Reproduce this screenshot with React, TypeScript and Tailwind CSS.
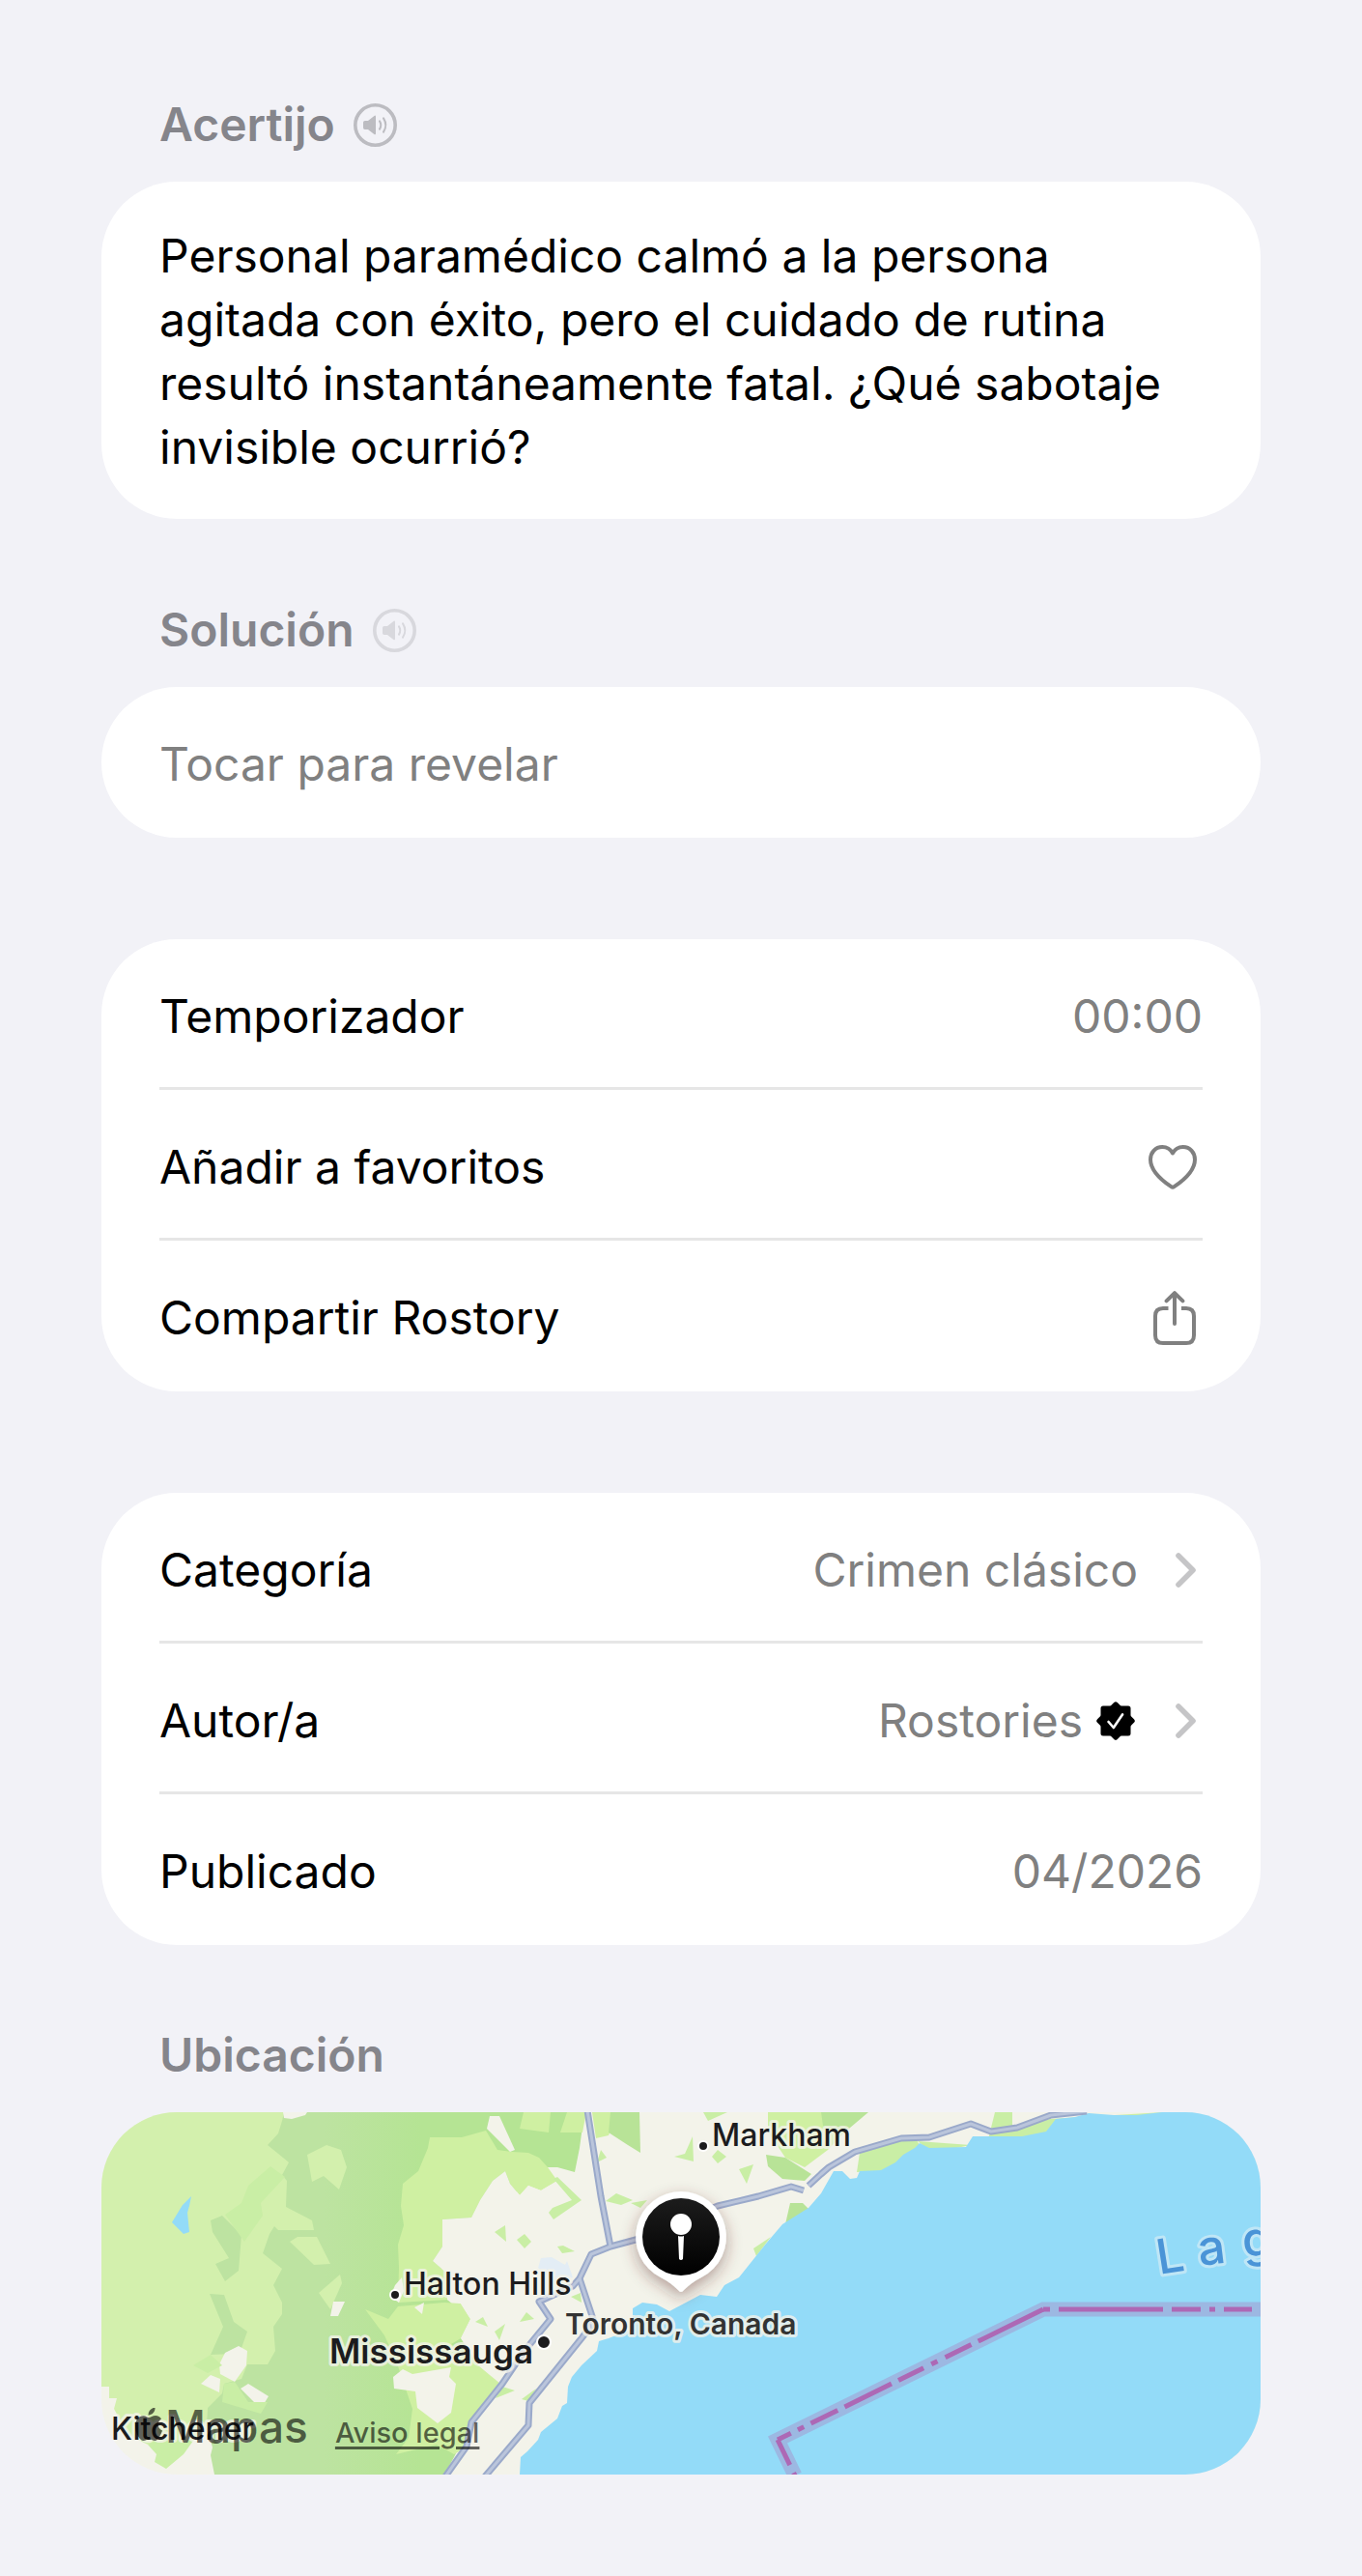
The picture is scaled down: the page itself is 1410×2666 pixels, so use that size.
import React from 'react';

const GREEN = '#c9eea5';
const URBAN = '#f3f3ea';
const LIME = '#cff0a2';
const WOODS = '#b8e397';
const FIELD = '#d3f0ad';

const fields = [
  '233,34 213,44 218,72 230,66 246,80 254,57 248,39',
  '195,134 203,129 223,129 232,147 237,157 220,158',
  '225,187 247,168 249,177 237,204',
];

const woods = [
  '113,112 125,107 145,127 142,164 128,175 118,157 132,151 115,124',
  '112,188 127,189 137,217 151,227 145,244 135,250 113,251 126,222',
];

const limes = [
  '340,26 373,26 398,19 410,39 425,41 442,42 453,47 462,57 472,71 455,81 442,76 433,86 423,74 418,61 405,71 392,91 383,109 353,111 353,139 343,154 358,167 358,194 307,197 308,161 307,137 313,117 310,97 312,74 328,61 338,37',
  '273,204 297,214 307,201 355,197 372,198 382,214 372,234 362,240 390,262 413,281 383,321 377,347 365,354 347,344 305,354 318,337 322,307 305,257 293,231',
  '437,0 465,0 463,21 433,17',
  '482,0 502,0 498,21 475,21',
  '508,0 535,0 525,24 512,27',
  '690,0 747,0 768,22 752,39 728,57 708,47 690,20',
];

const urbanPatches = [
  '302,274 312,266 322,271 362,264 360,274 367,281 362,311 348,322 327,306 325,289 303,286',
  '122,261 128,249 142,242 151,247 150,262 138,279 123,271',
  '103,281 113,272 123,276 122,290',
  '144,286 152,281 173,294 165,307',
  '237,211 240,196 252,196 245,211',
  '299,191 304,179 311,171 313,185 308,197',
  '188,0 213,0 211,3 197,7 189,6',
  '402,4 412,4 428,39 423,41 399,17',
  '324,202 334,197 332,209',
];

const greens = [
  '152,76 175,56 190,67 165,94 167,107 148,134 128,106 145,94',
  '95,262 113,251 125,262 110,270',
  '127,281 138,279 152,300 172,300 165,312 125,300',
  '48,344 60,338 95,340 85,354 67,369 55,362 57,354',
  '623,0 648,0 628,9',
  '593,46 604,43 612,25 613,51',
  '632,46 638,39 647,46 638,53',
  '660,59 675,54 668,74',
  '522,92 533,84 550,91 538,96',
  '548,94 565,91 558,99',
  '463,104 467,99 487,91 468,69 472,67 497,91 468,111',
  '407,124 418,117 419,134',
  '430,132 438,126 445,134 438,141',
  '472,139 478,138 490,144 477,146',
  '513,52 517,39 523,47',
  '433,217 440,207 448,214',
  '387,217 395,212 400,222',
  '407,227 418,219 412,236',
  '408,296 415,284 428,288',
  '435,297 450,286 442,299',
  '675,141 693,129 678,149',
  '782,62 785,42 842,25 850,40 822,60',
  '845,30 900,34 860,42',
  '918,28 925,0 943,0 943,16 982,7 1100,0 1100,8 980,28',
  '486,191 496,187 497,197',
];

const darkWoods = [
  '527,0 557,0 558,42 545,34 525,21',
  '745,0 794,0 768,22 747,14',
  '688,44 708,47 735,64 728,71 705,69 690,56',
  '708,116 713,94 726,94 732,100',
];

const roads = [
  'M503 -2 L517 87 L527 139',
  'M495 172 L507 147 L527 139 L553 132 L638 97 L680 87 L714 77 L727 81',
  'M732 76 L745 64 L753 57 L780 41 L828 27 L857 26 L900 12 L921 20 L948 16 L983 3 L1020 -1',
  'M495 172 L510 217 L497 234 L443 301 L442 324 L397 377',
  'M495 172 L488 180 L453 196 L465 214 L438 247 L415 281 L383 321 L378 346 L356 377',
];

const borders = [
  { d: 'M975 204 L700 339', dash: '75 8 30 9 7 9 29 8 54 8 31 8 7 8 30' },
  { d: 'M975 204 L1200 204', dash: '7 9 108 9 30 9 6 9 29 20' },
  { d: 'M700 339 L718 376', dash: '29 9 10' },
];

function Shapes({ items, fill }: { items: string[]; fill: string }) {
  return (
    <g fill={fill}>
      {items.map((points, i) => (
        <polygon key={i} points={points} />
      ))}
    </g>
  );
}

function MapDrawing() {
  return (
    <svg
      viewBox="0 0 1200 375"
      preserveAspectRatio="xMidYMid slice"
      className="block h-[375px] w-full"
      role="img"
      aria-label="Toronto, Canada"
    >
      <defs>
        <linearGradient id="woods" gradientUnits="userSpaceOnUse" x1="230" x2="330" y1="0" y2="0">
          <stop offset="0" stopColor="#bde3a1" />
          <stop offset="1" stopColor="#b5e494" />
        </linearGradient>
        <linearGradient id="pin" x1="0" x2="0" y1="0" y2="1">
          <stop offset="0" stopColor="#1c1c1c" />
          <stop offset="1" stopColor="#000" />
        </linearGradient>
        <filter id="pinShadow" x="-50%" y="-50%" width="200%" height="200%">
          <feDropShadow dx="0" dy="6" stdDeviation="8" floodColor="#5a2020" floodOpacity="0.4" />
        </filter>
      </defs>

      {/* land */}
      <rect width="1200" height="375" fill={URBAN} />
      <polygon
        fill={FIELD}
        points="0,0 240,0 240,300 115,325 95,340 48,344 28,334 13,307 16,296 8,296 8,284 0,284"
      />
      <polygon
        fill="url(#woods)"
        points="189,0 500,0 495,37 490,62 472,57 460,57 440,76 400,100 350,150 358,194 382,214 372,234 390,262 383,321 365,357 355,375 117,375 113,355 115,347 109,324 110,306 125,291 127,281 145,276 151,261 158,261 172,261 180,247 178,222 187,209 187,197 178,179 187,162 167,146 174,126 179,118 183,122 220,122 218,112 191,98 192,71 187,65 194,52 188,47 172,34 183,22 187,9"
      />
      <Shapes items={fields} fill={FIELD} />
      <Shapes items={woods} fill="#bde3a1" />
      <Shapes items={limes} fill={LIME} />
      <polygon
        fill={URBAN}
        points="418,61 405,71 392,91 383,109 353,111 353,139 343,154 358,167 358,194 372,198 382,214 372,234 410,240 470,160 480,90 472,71 455,81 442,76 433,86 423,74"
      />
      <Shapes items={urbanPatches} fill={URBAN} />
      <Shapes items={greens} fill={GREEN} />
      <Shapes items={darkWoods} fill={WOODS} />
      <polygon points="452,161 455,151 466,150 480,158 482,154 488,171 470,176" fill="#e3edf5" />

      {/* water */}
      <polygon points="93,87 91,97 89,104 91,124 85,126 73,114 84,96" fill="#93dbf8" />
      <polygon
        fill="#93dbf8"
        points="433,375 434,357 441,351 452,339 455,331 472,317 477,304 482,301 483,284 487,274 497,262 513,247 515,237 525,234 550,224 550,203 560,197 575,199 588,206 605,197 620,189 637,191 645,179 660,171 672,156 688,136 705,116 732,99 745,84 758,61 767,61 775,69 782,68 785,61 807,60 822,52 830,44 842,37 847,32 857,37 895,36 902,25 953,25 978,20 988,7 1008,5 1022,1 1048,3 1072,3 1098,0 1200,0 1200,375"
      />

      {/* roads */}
      <g fill="none" strokeLinejoin="round">
        {roads.map((d) => (
          <path key={d} d={d} stroke="#9aa9ca" strokeWidth="7" />
        ))}
        {roads.map((d) => (
          <path key={d} d={d} stroke="#bac5db" strokeWidth="3" />
        ))}
      </g>

      {/* border on the lake */}
      <path d="M718 376 L700 339 L975 204 L1200 204" fill="none" stroke="#9cb8e2" strokeWidth="15" />
      {borders.map((b) => (
        <path key={b.d} d={b.d} fill="none" stroke="#ad68b5" strokeWidth="5" strokeDasharray={b.dash} />
      ))}

      <g fill="#1c1c1e" stroke="#fff" strokeWidth="2">
        <circle cx="623" cy="35" r="5" />
        <circle cx="304" cy="189" r="5" />
        <circle cx="458" cy="238" r="7" />
      </g>

      <g
        className="font-medium [paint-order:stroke]"
        fill="#1c1c1e"
        stroke={URBAN}
        strokeOpacity="0.8"
        strokeWidth="6"
        strokeLinejoin="round"
        fontSize="32"
      >
        <text x="632" y="35">Markham</text>
        <text x="313" y="189">Halton Hills</text>
        <text x="10" y="339">Kitchener</text>
        <text x="236" y="260" fontSize="35" className="font-semibold">Mississauga</text>
        <text x="480" y="230" fontSize="30" className="font-semibold" fill="#333">Toronto, Canada</text>
        <text x="1095 1137 1182" y="168 159 150" rotate="-9 -7 -4" fontSize="50" fill="#4a94d7" stroke="#cbe8f5">Lag</text>
      </g>

      {/* pin */}
      <path
        d="M600 82 A47 47 0 0 1 621 171 Q611 176 603 184 Q600 188 597 184 Q589 176 579 171 A47 47 0 0 1 600 82 Z"
        fill="#fff"
        filter="url(#pinShadow)"
      />
      <circle cx="600" cy="129" r="40" fill="url(#pin)" />
      <circle cx="600" cy="116" r="11" fill="#fff" />
      <path d="M597 128 Q600 129 603 128 L602 152 Q600 154 598 152 Z" fill="#fff" />
    </svg>
  );
}

function SpeakerIcon() {
  return (
    <svg viewBox="0 0 45 45" className="size-[45px]" fill="none" stroke="currentColor" aria-hidden="true">
      <circle cx="22.5" cy="22.5" r="20.7" strokeWidth="3.6" />
      <path
        d="M11.8 18 H15 L21.4 12.9 Q23 12 23 13.8 V31.2 Q23 33 21.4 32 L15 27 H11.8 Q10 27 10 25.2 V19.8 Q10 18 11.8 18 Z"
        fill="currentColor"
        stroke="none"
      />
      <path d="M27 18.4 Q29.6 22.5 27 26.6 M31 15.4 Q35.6 22.5 31 29.6" strokeWidth="2" strokeLinecap="round" />
    </svg>
  );
}

function HeartIcon() {
  return (
    <svg viewBox="0 0 50 46" className="h-[46px] w-[50px]" aria-hidden="true">
      <path
        d="M25 8.5 C22.5 4 18.5 2 14.3 2 C7 2 2 7.8 2 15 C2 25 10.5 34.5 23.5 43.2 Q25 44.2 26.5 43.2 C39.5 34.5 48 25 48 15 C48 7.8 43 2 35.7 2 C31.5 2 27.5 4 25 8.5 Z"
        fill="none"
        stroke="currentColor"
        strokeWidth="4"
        strokeLinejoin="round"
      />
    </svg>
  );
}

function ShareIcon() {
  return (
    <svg
      viewBox="0 0 44 56"
      className="h-[56px] w-[44px]"
      fill="none"
      stroke="currentColor"
      strokeWidth="4"
      aria-hidden="true"
    >
      <path d="M15.5 18 H10 Q2 18 2 26 V46 Q2 54 10 54 H34 Q42 54 42 46 V26 Q42 18 34 18 H29" />
      <path d="M22 34 V2.6 M13.6 10.4 L22 2.2 L30.4 10.4" strokeLinecap="round" strokeLinejoin="round" />
    </svg>
  );
}

function Chevron() {
  return (
    <svg viewBox="0 0 21 36" className="h-[36px] w-[21px] text-[#c5c5c7]" aria-hidden="true">
      <path
        d="M3 3 L18 18 L3 33"
        fill="none"
        stroke="currentColor"
        strokeWidth="5.6"
        strokeLinecap="round"
        strokeLinejoin="round"
      />
    </svg>
  );
}

function VerifiedBadge() {
  return (
    <svg viewBox="0 0 40 40" className="size-[40px]" aria-hidden="true">
      <g fill="#000" stroke="#000" strokeWidth="5" strokeLinejoin="round">
        <rect x="7" y="7" width="26" height="26" />
        <path d="M20 2.8 L37.2 20 L20 37.2 L2.8 20 Z" />
      </g>
      <path
        d="M12.6 21 L17.8 27 L27 13.4"
        fill="none"
        stroke="#fff"
        strokeWidth="2.6"
        strokeLinecap="round"
        strokeLinejoin="round"
      />
    </svg>
  );
}

function SectionHeader({ title, children }: { title: string; children?: React.ReactNode }) {
  return (
    <header className="mb-[26px] flex items-center gap-[19px] px-[60px]">
      <h2 className="font-semibold text-[#85858b]">{title}</h2>
      {children}
    </header>
  );
}

function Card({ children }: { children: React.ReactNode }) {
  return <div className="overflow-hidden rounded-[78px] bg-white px-[60px]">{children}</div>;
}

const row =
  'flex w-full items-center justify-between border-b-[3px] border-[#e6e6e6] pt-[47px] pb-[40px] text-left';
const lastRow = 'flex w-full items-center justify-between pt-[47px] pb-[43px] text-left';
const value = 'flex h-[66px] items-center text-[#808080]';

export default function App() {
  return (
    <main className="min-h-screen bg-[#f2f2f7] px-[105px] pt-[96px] pb-[105px] font-['Inter',sans-serif] text-[48px] leading-[66px] text-black">
      <section>
        <SectionHeader title="Acertijo">
          <button type="button" aria-label="Escuchar acertijo" className="text-[#bcbcc1]">
            <SpeakerIcon />
          </button>
        </SectionHeader>
        <Card>
          <p className="pt-[44px] pb-[41px]">
            Personal paramédico calmó a la persona agitada con éxito, pero el cuidado de rutina resultó
            instantáneamente fatal. ¿Qué sabotaje invisible ocurrió?
          </p>
        </Card>
      </section>

      <section className="mt-[82px]">
        <SectionHeader title="Solución">
          <button type="button" aria-label="Escuchar solución" disabled className="text-[#d8d8dd]">
            <SpeakerIcon />
          </button>
        </SectionHeader>
        <Card>
          <button type="button" className="block w-full pt-[47px] pb-[43px] text-left text-[#808080]">
            Tocar para revelar
          </button>
        </Card>
      </section>

      <section className="mt-[105px]">
        <Card>
          <div className={row}>
            <span>Temporizador</span>
            <span className={value}>00:00</span>
          </div>
          <button type="button" className={row}>
            <span>Añadir a favoritos</span>
            <span className={`${value} pr-[6px]`}>
              <HeartIcon />
            </span>
          </button>
          <button type="button" className={lastRow}>
            <span>Compartir Rostory</span>
            <span className={`${value} pr-[7px]`}>
              <ShareIcon />
            </span>
          </button>
        </Card>
      </section>

      <section className="mt-[105px]">
        <Card>
          <a href="#categoria" className={row}>
            <span>Categoría</span>
            <span className={`${value} gap-[39px] pr-[7px]`}>
              Crimen clásico
              <Chevron />
            </span>
          </a>
          <a href="#autor" className={row}>
            <span>Autor/a</span>
            <span className={`${value} gap-[42px] pr-[7px]`}>
              <span className="flex items-center gap-[14px]">
                Rostories
                <VerifiedBadge />
              </span>
              <Chevron />
            </span>
          </a>
          <div className={lastRow}>
            <span>Publicado</span>
            <span className={value}>04/2026</span>
          </div>
        </Card>
      </section>

      <section className="mt-[81px]">
        <SectionHeader title="Ubicación" />
        <div className="relative overflow-hidden rounded-[78px]">
          <MapDrawing />
          <div className="absolute bottom-[13px] left-[35px] flex items-baseline gap-[28px] text-black/60">
            <span className="flex items-baseline gap-[3px] text-[46px] leading-[60px] font-medium">
              <svg viewBox="0 0 28 36" className="h-[36px] w-[28px]" fill="currentColor" aria-hidden="true">
                <path d="M14 10 C16 10 18 8 21 8 C23.500 8 26 9.500 27 11.500 C22 14.500 23 21.500 28 23.500 C26.500 28 23.500 34 20.500 34 C18 34 17.500 32.600 14.500 32.600 C11.500 32.600 10.800 34 8.500 34 C5 34 0 26.500 0 19 C0 12 4 8.200 8.500 8.200 C11 8.200 12.500 10 14 10 Z M13.500 7.500 C13.300 3.500 16.500 0 20.500 -0.500 C21 4 17.500 7.700 13.500 7.500 Z" />
              </svg>
              Mapas
            </span>
            <a
              href="#legal"
              className="text-[29px] leading-[60px] font-medium underline decoration-[3px] underline-offset-[4px]"
            >
              Aviso legal
            </a>
          </div>
        </div>
      </section>
    </main>
  );
}
